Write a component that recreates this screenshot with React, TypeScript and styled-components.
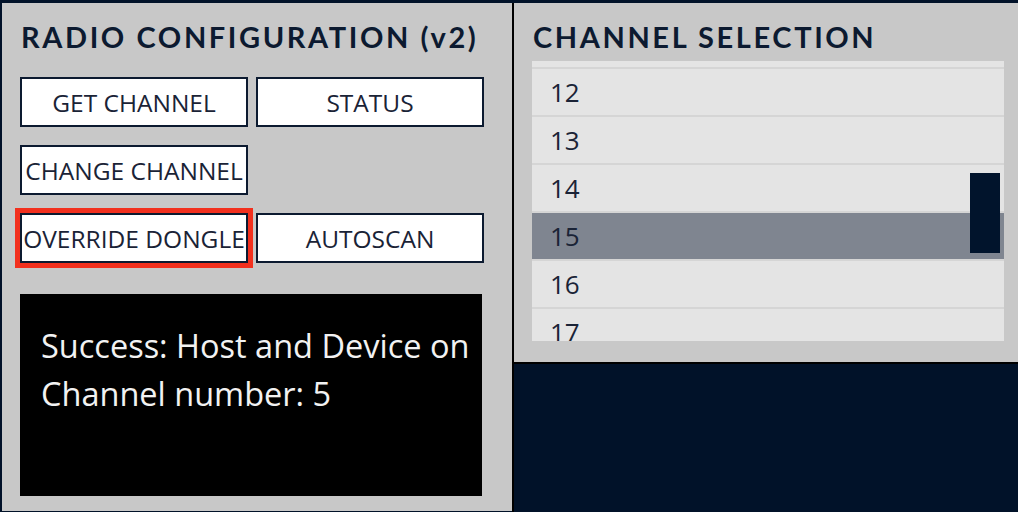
import React, { useLayoutEffect, useRef } from "react";
import styled, { createGlobalStyle } from "styled-components";

const Global = createGlobalStyle`
  html, body { margin: 0; padding: 0; background: #011229; }
  body { width: 1018px; height: 512px; overflow: hidden; }
  * { box-sizing: border-box; }
`;

const Screen = styled.div`
  display: flex;
  width: 1018px;
  height: 512px;
  padding: 3px 0 0 2px;
  background: #011229;
`;

const LeftPanel = styled.section`
  width: 510px;
  height: 508px;
  background: #c8c8c8;
  padding: 16px 0 0 18px;
  display: flex;
  flex-direction: column;
`;

const RightColumn = styled.div`
  flex: 1;
  display: flex;
  flex-direction: column;
  border-left: 2px solid #000;
`;

const RightPanel = styled.section`
  height: 361px;
  background: #c8c8c8;
  border-bottom: 2px solid #000;
  padding: 16px 14px 0 18px;
  display: flex;
  flex-direction: column;
`;

const Title = styled.h1`
  margin: 0 0 0 1px;
  font-family: Lato, "Open Sans", sans-serif;
  font-weight: 700;
  font-size: 29px;
  line-height: 35px;
  color: #0c1a30;
  letter-spacing: 2.6px;
  white-space: nowrap;
`;

const ButtonGrid = styled.div`
  margin-top: 23px;
  display: grid;
  grid-template-columns: 228px 228px;
  grid-auto-rows: 50px;
  column-gap: 8px;
  row-gap: 18px;
`;

const Button = styled.button<{ $focused?: boolean; $col?: number }>`
  grid-column: ${(p) => p.$col ?? "auto"};
  margin: 0;
  padding: 0;
  background: #fff;
  border: 2px solid #0c1a30;
  font-family: "Open Sans", "Noto Sans", sans-serif;
  font-size: 24.5px;
  color: #1a2336;
  white-space: nowrap;
  overflow: visible;
  display: flex;
  align-items: center;
  justify-content: center;
  outline: ${(p) => (p.$focused ? "5px solid #f2301e" : "none")};
  outline-offset: 0;
  cursor: pointer;
`;

const Output = styled.div`
  margin-top: 31px;
  width: 462px;
  height: 202px;
  background: #000;
  color: #f2f2f2;
  padding: 28px 0 0 21px;
  font-family: "Open Sans", "Noto Sans", sans-serif;
  font-size: 32.5px;
  line-height: 48px;
  white-space: nowrap;
`;

const ListWrap = styled.div`
  position: relative;
  margin-top: 7px;
  width: 472px;
  height: 280px;
`;

const List = styled.ul`
  margin: 0;
  padding: 0;
  list-style: none;
  width: 100%;
  height: 100%;
  background: #e4e4e4;
  overflow-y: scroll;
  scrollbar-width: none;
  &::-webkit-scrollbar { display: none; }
`;

const Item = styled.li<{ $selected?: boolean }>`
  height: 48px;
  border-top: 2px solid #d5d5d5;
  background: ${(p) => (p.$selected ? "#7f8590" : "#e4e4e4")};
  padding-left: 18px;
  font-family: "Open Sans", "Noto Sans", sans-serif;
  font-size: 26px;
  line-height: 46px;
  color: #1a2336;
  background-clip: padding-box;
`;

const Thumb = styled.div`
  position: absolute;
  left: 438px;
  top: 112px;
  width: 30px;
  height: 80px;
  background: #01142c;
`;

const Filler = styled.div`
  flex: 1;
  background: #011229;
`;

const channels = Array.from({ length: 26 }, (_, i) => i + 1);

export default function App() {
  const listRef = useRef<HTMLUListElement>(null);
  useLayoutEffect(() => {
    if (listRef.current) listRef.current.scrollTop = 522;
  }, []);
  return (
    <>
      <Global />
      <Screen>
        <LeftPanel>
          <Title>RADIO CONFIGURATION (v2)</Title>
          <ButtonGrid>
            <Button>GET CHANNEL</Button>
            <Button>STATUS</Button>
            <Button $col={1}>CHANGE CHANNEL</Button>
            <Button $focused $col={1}>OVERRIDE DONGLE</Button>
            <Button>AUTOSCAN</Button>
          </ButtonGrid>
          <Output>
            Success: Host and Device on
            <br />
            Channel number: 5
          </Output>
        </LeftPanel>
        <RightColumn>
          <RightPanel>
            <Title>CHANNEL SELECTION</Title>
            <ListWrap>
              <List ref={listRef}>
                {channels.map((c) => (
                  <Item key={c} $selected={c === 15}>
                    {c}
                  </Item>
                ))}
              </List>
              <Thumb />
            </ListWrap>
          </RightPanel>
          <Filler />
        </RightColumn>
      </Screen>
    </>
  );
}
